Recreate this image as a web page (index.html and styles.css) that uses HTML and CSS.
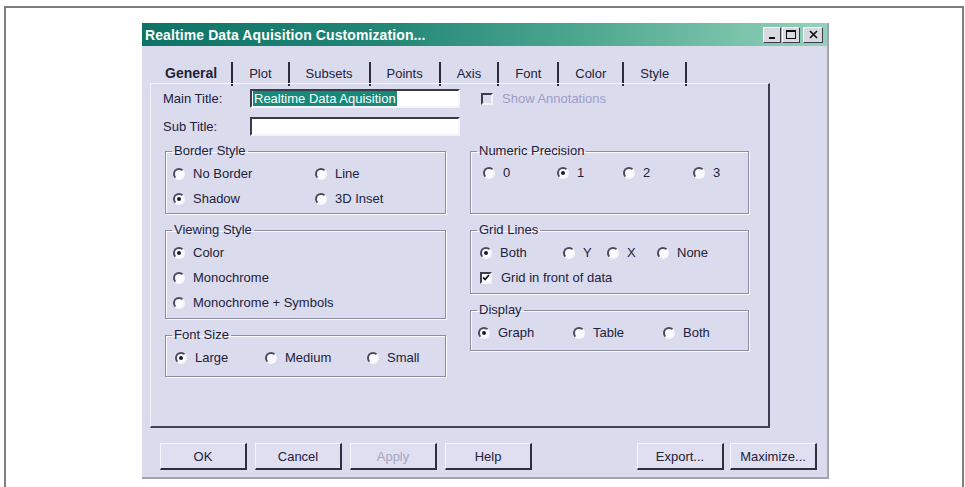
FILE: index.html
```html
<!DOCTYPE html>
<html>
<head>
<meta charset="utf-8">
<title>Realtime Data Aquisition Customization</title>
<link rel="stylesheet" href="styles.css">
</head>
<body>
<div class="frame">
  <div class="dialog">
    <div class="titlebar">
      <span class="caption">Realtime Data Aquisition Customization...</span>
      <div class="caption-btns">
        <span class="cbtn"><svg width="9" height="9" viewBox="0 0 9 9"><rect x="1" y="7" width="6" height="2" fill="#111"/></svg></span>
        <span class="cbtn"><svg width="10" height="9" viewBox="0 0 10 9"><rect x="0.5" y="0.5" width="9" height="8" fill="none" stroke="#111"/><rect x="0" y="0" width="10" height="2" fill="#111"/></svg></span>
        <span class="cbtn close"><svg width="9" height="9" viewBox="0 0 9 9"><path d="M1 1L8 8M8 1L1 8" stroke="#111" stroke-width="1.7" fill="none"/></svg></span>
      </div>
    </div>

    <div class="tabs">
      <span class="tab active">General</span>
      <span class="tab">Plot</span>
      <span class="tab">Subsets</span>
      <span class="tab">Points</span>
      <span class="tab">Axis</span>
      <span class="tab">Font</span>
      <span class="tab">Color</span>
      <span class="tab">Style</span>
    </div>

    <div class="panel">
      <div class="titles">
        <label class="lbl">Main Title:</label>
        <span class="edit"><span class="sel">Realtime Data Aquisition</span></span>
        <label class="check disabled"><span class="box"></span>Show Annotations</label>
        <label class="lbl">Sub Title:</label>
        <span class="edit"></span>
      </div>

      <div class="groups">
        <div class="col">
          <fieldset class="grp h70">
            <legend>Border Style</legend>
            <div class="opts cols-border">
              <label class="opt"><span class="radio"></span>No Border</label>
              <label class="opt"><span class="radio"></span>Line</label>
              <label class="opt"><span class="radio on"></span>Shadow</label>
              <label class="opt"><span class="radio"></span>3D Inset</label>
            </div>
          </fieldset>
          <fieldset class="grp h96">
            <legend>Viewing Style</legend>
            <div class="opts">
              <label class="opt"><span class="radio on"></span>Color</label>
              <label class="opt"><span class="radio"></span>Monochrome</label>
              <label class="opt"><span class="radio"></span>Monochrome + Symbols</label>
            </div>
          </fieldset>
          <fieldset class="grp h49">
            <legend>Font Size</legend>
            <div class="opts cols-font">
              <label class="opt"><span class="radio on"></span>Large</label>
              <label class="opt"><span class="radio"></span>Medium</label>
              <label class="opt"><span class="radio"></span>Small</label>
            </div>
          </fieldset>
        </div>

        <div class="col">
          <fieldset class="grp h70">
            <legend>Numeric Precision</legend>
            <div class="opts cols-prec">
              <label class="opt"><span class="radio"></span>0</label>
              <label class="opt"><span class="radio on"></span>1</label>
              <label class="opt"><span class="radio"></span>2</label>
              <label class="opt"><span class="radio"></span>3</label>
            </div>
          </fieldset>
          <fieldset class="grp h71">
            <legend>Grid Lines</legend>
            <div class="opts cols-grid">
              <label class="opt"><span class="radio on"></span>Both</label>
              <label class="opt"><span class="radio"></span>Y</label>
              <label class="opt"><span class="radio"></span>X</label>
              <label class="opt"><span class="radio"></span>None</label>
              <label class="check span4"><span class="box"><svg width="9" height="9" viewBox="0 0 9 9"><path d="M1.2 4.3L3.5 6.8L7.8 1.6" stroke="#111" stroke-width="1.9" fill="none"/></svg></span>Grid in front of data</label>
            </div>
          </fieldset>
          <fieldset class="grp h48">
            <legend>Display</legend>
            <div class="opts cols-display">
              <label class="opt"><span class="radio on"></span>Graph</label>
              <label class="opt"><span class="radio"></span>Table</label>
              <label class="opt"><span class="radio"></span>Both</label>
            </div>
          </fieldset>
        </div>
      </div>
    </div>

    <div class="buttons">
      <span class="btn">OK</span>
      <span class="btn">Cancel</span>
      <span class="btn disabled">Apply</span>
      <span class="btn">Help</span>
      <span class="btn push">Export...</span>
      <span class="btn">Maximize...</span>
    </div>
  </div>
</div>
</body>
</html>
```

FILE: styles.css
```css
html, body { margin:0; padding:0; overflow:hidden; background:#fff;}
body { font:13px "Liberation Sans", Arial, sans-serif; color:#22223a;}

/* page frame round the dialog */
.frame { margin:6px 1px 0 4px; height:490px; border:2px solid #7e7e7e; border-bottom:0; padding:15px 0 0 136px; box-sizing:border-box;}

.dialog { width:687px; height:456px; box-sizing:border-box; background:#dbdbee; border-right:2px solid #a2a2b4; border-bottom:2px solid #a2a2b4; display:flex; flex-direction:column;}

/* caption */
.titlebar { height:23px; display:flex; align-items:center; padding:0 4px 0 3px; background:linear-gradient(to right, #0d7366 0%, #218676 35%, #4fa890 65%, #94d2ba 100%);}
.caption { flex:1; color:#fff; font-weight:bold; font-size:14px; letter-spacing:.1px;}
.caption-btns { display:flex; gap:1px;}
.cbtn { width:18px; height:16px; box-sizing:border-box; display:flex; align-items:center; justify-content:center; background:#d9d9e2; border:1px solid; border-color:#fff #3c3c4c #3c3c4c #fff;}
.cbtn.close { margin-left:2px; width:20px;}

/* tab strip */
.tabs { display:flex; height:21px; margin:16px 0 0 8px;}
.tab { height:24px; line-height:23px; padding:0 16px; border-right:2px solid #2a2a40;}
.tab:first-child { padding:0 14px 0 15px;}
.tab.active { font-weight:bold; font-size:14px;}

.panel { width:620px; height:345px; box-sizing:border-box; margin-left:8px; padding:5px 0 0 12px; border-top:1px solid #f2f2fb; border-left:1px solid #f2f2fb; border-right:2px solid #3a3a52; border-bottom:2px solid #45455c;}

/* title fields */
.titles { display:grid; grid-template-columns:87px 210px auto; grid-auto-rows:19px; row-gap:9px; align-items:center;}
.edit { height:19px; box-sizing:border-box; background:#fff; border:2px solid; border-color:#3a3a48 #f4f4fa #f4f4fa #3a3a48; padding:1px 0 0 1px; line-height:14px; overflow:hidden; white-space:nowrap;}
.sel { background:#168a7a; color:#fff; padding:0 1px;}

.check { display:flex; align-items:center; gap:9px;}
.titles .check { margin-left:21px;}
.check.disabled { color:#9d9dc6;}
.box { width:12px; height:12px; box-sizing:border-box; display:flex; align-items:center; justify-content:center; background:#fff; border:2px solid; border-color:#3c3c4c #f4f4fa #f4f4fa #3c3c4c;}
.check.disabled .box { background:#dbdbee;}

/* group boxes */
.groups { display:grid; grid-template-columns:281px 279px; column-gap:24px; margin:8px 0 0 2px;}
.col { display:flex; flex-direction:column; gap:9px;}
.grp { margin:0; padding:0; box-sizing:border-box; border:1px solid #8c8ca6; box-shadow:1px 1px 0 #fafaff, inset 1px 1px 0 #fafaff;}
.grp legend { margin-left:6px; padding:0 2px; line-height:14px;}
.h70 { height:70px;} .h96 { height:96px;} .h49 { height:49px;} .h71 { height:71px;} .h48 { height:48px;}

.opts { display:grid; grid-auto-rows:25px; padding:3px 0 0 7px;}
.cols-border { grid-template-columns:142px auto;}
.cols-font { grid-template-columns:90px 102px auto; padding-left:9px;}
.cols-prec { grid-template-columns:74px 66px 70px auto; padding:2px 0 0 12px;}
.cols-grid { grid-template-columns:83px 44px 50px auto; padding-left:9px;}
.cols-display { grid-template-columns:95px 90px auto;}
.span4 { grid-column:1 / 5; padding-left:-2px;}

.opt { display:flex; align-items:center; gap:8px;}
.radio { position:relative; width:12px; height:12px; box-sizing:border-box; border-radius:50%; background:#fbfbff; border:2px solid; border-color:#4a4a5c #f6f6fc #f6f6fc #4a4a5c;}
.radio.on:after { content:""; position:absolute; left:2px; top:2px; width:4px; height:4px; border-radius:50%; background:#1c1c2c;}

/* command buttons */
.buttons { display:flex; gap:8px; margin:15px 10px 0 18px;}
.btn { width:87px; height:27px; box-sizing:border-box; display:flex; align-items:center; justify-content:center; background:#dfdff1; border:1px solid; border-color:#f6f6ff #2e2e3e #2e2e3e #f6f6ff; border-right-width:2px; border-bottom-width:2px;}
.btn.disabled { color:#a6a6c2;}
.btn.push { margin-left:auto; margin-right:-2px;}
```
